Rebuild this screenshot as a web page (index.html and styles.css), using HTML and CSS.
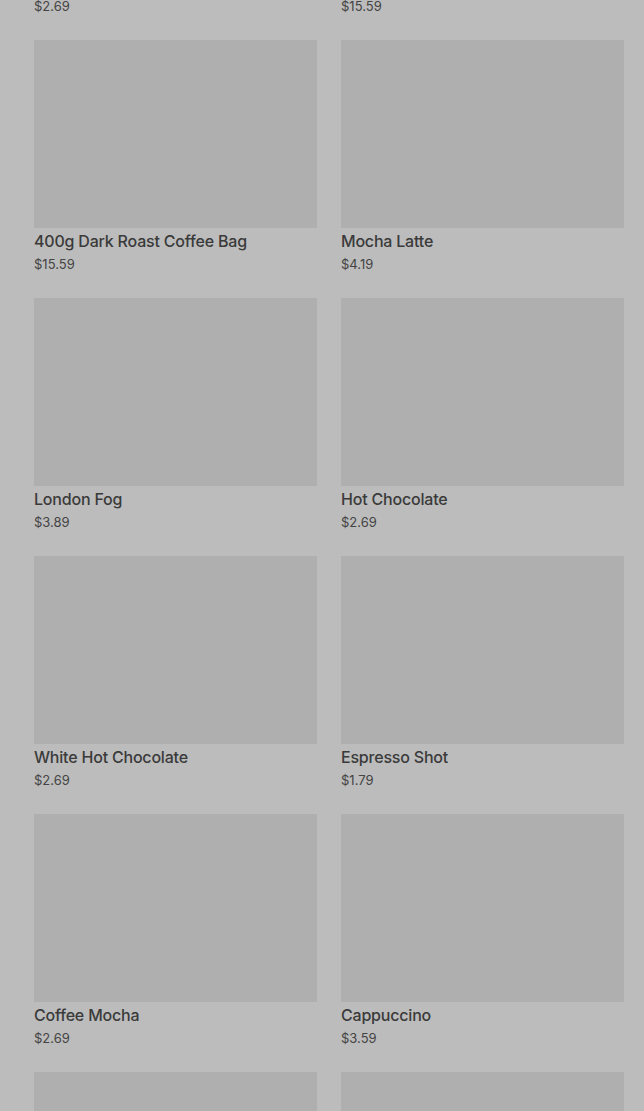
FILE: index.html
```html
<!DOCTYPE html>
<html>
	<head>
		<title>Menu</title>
		<meta charset="UTF-8"/>
		<link rel="stylesheet" href="styles.css">
	</head>
	<body>
		<div class="menu">

		  <div class="item">
			<div class="photo"></div>
			<p class="name">Caffe Latte</p>
			<p class="price">$2.69</p>
		  </div>
		  <div class="item">
			<div class="photo"></div>
			<p class="name">1kg Medium Roast Coffee Bag</p>
			<p class="price">$15.59</p>
		  </div>

		  <div class="item">
			<div class="photo"></div>
			<p class="name">400g Dark Roast Coffee Bag</p>
			<p class="price">$15.59</p>
		  </div>
		  <div class="item">
			<div class="photo"></div>
			<p class="name">Mocha Latte</p>
			<p class="price">$4.19</p>
		  </div>

		  <div class="item">
			<div class="photo"></div>
			<p class="name">London Fog</p>
			<p class="price">$3.89</p>
		  </div>
		  <div class="item">
			<div class="photo"></div>
			<p class="name">Hot Chocolate</p>
			<p class="price">$2.69</p>
		  </div>

		  <div class="item">
			<div class="photo"></div>
			<p class="name">White Hot Chocolate</p>
			<p class="price">$2.69</p>
		  </div>
		  <div class="item">
			<div class="photo"></div>
			<p class="name">Espresso Shot</p>
			<p class="price">$1.79</p>
		  </div>

		  <div class="item">
			<div class="photo"></div>
			<p class="name">Coffee Mocha</p>
			<p class="price">$2.69</p>
		  </div>
		  <div class="item">
			<div class="photo"></div>
			<p class="name">Cappuccino</p>
			<p class="price">$3.59</p>
		  </div>

		  <div class="item">
			<div class="photo"></div>
			<p class="name">Americano</p>
			<p class="price">$2.29</p>
		  </div>
		  <div class="item">
			<div class="photo"></div>
			<p class="name">Chai Latte</p>
			<p class="price">$3.89</p>
		  </div>

		</div>
	</body>
</html>
```
FILE: styles.css
```css
* {
  box-sizing: border-box;
}

html, body {
  height: 100%;
  overflow: hidden;
}

body {
  margin: 0;
  background: #bcbcbc;
  font-family: Inter, "Liberation Sans", sans-serif;
  color: #3b3b3b;
}

/* list is scrolled: first row sits above the window */
.menu {
  display: grid;
  grid-template-columns: 283px 283px;
  column-gap: 24px;
  padding: 0 20px 0 34px;
  margin-top: -218px;
}

.item {
  margin-bottom: 25px;
}

.photo {
  height: 188px;
  background: #afafaf;
}

.name {
  margin: 3px 0 0 0;
  font-size: 16px;
  line-height: 20px;
  font-weight: 500;
  letter-spacing: -0.2px;
  color: #3a3a3a;
}

.price {
  margin: 4px 0 0 0;
  font-size: 13px;
  line-height: 18px;
  color: #444;
}
```
